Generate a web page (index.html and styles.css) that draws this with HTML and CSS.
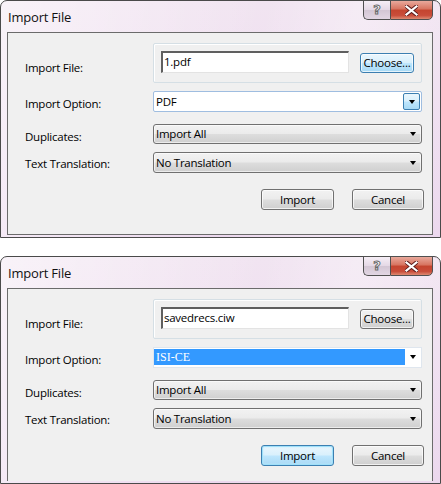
FILE: index.html
```html
<!DOCTYPE html>
<html>
<head>
<meta charset="utf-8">
<link rel="stylesheet" href="styles.css">
</head>
<body>
<div class="screen">
  <div class="window">
    <div class="titlebar">
      <span class="title">Import File</span>
      <div class="caption">
        <div class="cap help">?</div>
        <div class="cap close">
          <svg width="13" height="11" viewBox="0 0 13 11"><path d="M1 1 L12 10 M12 1 L1 10" stroke="#5a1a1a" stroke-width="4" stroke-linecap="square"/><path d="M1.5 1.5 L11.5 9.5 M11.5 1.5 L1.5 9.5" stroke="#fff" stroke-width="2.2" stroke-linecap="square"/></svg>
        </div>
      </div>
    </div>
    <div class="client">
      <div class="row row1">
        <span class="lbl l1">Import File:</span>
        <div class="group">
          <div class="input">1.pdf</div>
          <div class="btn btn-hot choose">Choose...</div>
        </div>
      </div>
      <div class="row row2">
        <span class="lbl l2">Import Option:</span>
        <div class="combo combo-edit">
          <span class="val">PDF</span>
          <span class="dd-btn"><span class="arrow"></span></span>
        </div>
      </div>
      <div class="row row3">
        <span class="lbl l3">Duplicates:</span>
        <div class="combo"><span class="val">Import All</span><span class="arrow"></span></div>
      </div>
      <div class="row row4">
        <span class="lbl l4">Text Translation:</span>
        <div class="combo"><span class="val">No Translation</span><span class="arrow"></span></div>
      </div>
      <div class="actions">
        <div class="btn import">Import</div>
        <div class="btn cancel">Cancel</div>
      </div>
    </div>
  </div>

  <div class="window second">
    <div class="titlebar">
      <span class="title">Import File</span>
      <div class="caption">
        <div class="cap help">?</div>
        <div class="cap close">
          <svg width="13" height="11" viewBox="0 0 13 11"><path d="M1 1 L12 10 M12 1 L1 10" stroke="#5a1a1a" stroke-width="4" stroke-linecap="square"/><path d="M1.5 1.5 L11.5 9.5 M11.5 1.5 L1.5 9.5" stroke="#fff" stroke-width="2.2" stroke-linecap="square"/></svg>
        </div>
      </div>
    </div>
    <div class="client">
      <div class="row row1">
        <span class="lbl l1">Import File:</span>
        <div class="group">
          <div class="input">savedrecs.ciw</div>
          <div class="btn choose">Choose...</div>
        </div>
      </div>
      <div class="row row2">
        <span class="lbl l2">Import Option:</span>
        <div class="combo combo-list">
          <span class="sel">ISI-CE</span>
          <span class="arrow"></span>
        </div>
      </div>
      <div class="row row3">
        <span class="lbl l3">Duplicates:</span>
        <div class="combo"><span class="val">Import All</span><span class="arrow"></span></div>
      </div>
      <div class="row row4">
        <span class="lbl l4">Text Translation:</span>
        <div class="combo"><span class="val">No Translation</span><span class="arrow"></span></div>
      </div>
      <div class="actions">
        <div class="btn btn-default import">Import</div>
        <div class="btn cancel">Cancel</div>
      </div>
    </div>
  </div>
</div>
</body>
</html>
```

FILE: styles.css
```css
html, body {
  margin: 0;
  padding: 0;
  background: #ffffff;
}
body {
  font-family: "Open Sans", "Noto Sans", sans-serif;
  font-size: 11.5px;
  letter-spacing: -0.25px;
  color: #000;
}
.screen {
  display: flex;
  flex-direction: column;
  gap: 18px;
  width: 441px;
}
.window {
  width: 441px;
  height: 238px;
  box-sizing: border-box;
  border: 1px solid #4a4a4a;
  border-radius: 7px 7px 0 0;
  padding: 0 7px 2px 6px;
  background:
    linear-gradient(100deg, rgba(255,255,255,0.55) 0%, rgba(255,255,255,0.25) 30%, rgba(255,255,255,0) 55%, rgba(255,255,255,0.3) 75%, rgba(255,255,255,0) 100%),
    linear-gradient(180deg, #f1e4f1 0%, #ecd8ee 100%);
  display: flex;
  flex-direction: column;
}
.second {
  height: 228px;
}
.titlebar {
  height: 31px;
  display: flex;
  justify-content: space-between;
  align-items: flex-start;
  flex: none;
}
.title {
  font-size: 13px;
  letter-spacing: -0.2px;
  line-height: 18px;
  margin-top: 7px;
  margin-left: 1px;
  color: #111;
}
.caption {
  display: flex;
  margin-top: -1px;
}
.cap {
  height: 20px;
  box-sizing: border-box;
  border: 1px solid #505050;
  display: flex;
  align-items: center;
  justify-content: center;
}
.help {
  width: 27px;
  border-right: none;
  border-radius: 0 0 0 5px;
  background: linear-gradient(180deg, #f6eef6 0%, #e4d8e5 50%, #d3c6d4 51%, #e2d6e3 100%);
  color: #fff;
  font-family: "DejaVu Sans", sans-serif;
  font-weight: bold;
  font-size: 13px;
  letter-spacing: 0;
  -webkit-text-stroke: 1px #6a6a6a;
  line-height: 18px;
}
.close {
  width: 43px;
  border-radius: 0 0 5px 0;
  background: linear-gradient(180deg, #e9a99c 0%, #d7735f 45%, #c4452f 50%, #c94d3a 80%, #de8a72 100%);
}
.client {
  flex: 1;
  box-sizing: border-box;
  width: 426px;
  border: 1px solid #6b6b6b;
  background: #f0f0f0;
  padding: 0 8px 0 17px;
  display: flex;
  flex-direction: column;
}
.second .client {
  border-bottom: none;
}
.row {
  display: flex;
  align-items: center;
  flex: none;
}
.lbl {
  width: 128px;
  flex: none;
  line-height: 16px;
}
.row1 { margin-top: 10px; height: 40px; }
.row2 { margin-top: 8px; height: 21px; }
.row3 { margin-top: 12px; height: 20px; }
.row4 { margin-top: 8px; height: 21px; }
.l1 { margin-top: 10px; }
.l2 { margin-top: 5px; }
.l3 { margin-top: 6px; }
.l4 { margin-top: 3px; }

.group {
  width: 269px;
  height: 40px;
  box-sizing: border-box;
  border: 1px solid #d5dfe5;
  box-shadow: inset 1px 1px 0 #fff;
  border-radius: 2px;
  padding: 0 7px 9px 7px;
  display: flex;
  align-items: flex-end;
  gap: 11px;
}
.input {
  width: 188px;
  height: 22px;
  box-sizing: border-box;
  background: #fff;
  border-top: 2px solid #5f5f5f;
  border-left: 2px solid #5f5f5f;
  border-right: 1px solid #e3e3e3;
  border-bottom: 1px solid #e3e3e3;
  padding-left: 1px;
  line-height: 17px;
}
.btn {
  box-sizing: border-box;
  height: 21px;
  border: 1px solid #707070;
  border-radius: 3px;
  background: linear-gradient(180deg, #f2f2f2 0%, #ebebeb 48%, #dddddd 52%, #cfcfcf 100%);
  box-shadow: inset 0 0 0 1px rgba(255,255,255,0.7);
  display: flex;
  align-items: center;
  justify-content: center;
  line-height: 16px;
}
.choose {
  width: 54px;
  height: 20px;
  padding-bottom: 1px;
}
.btn-hot, .btn-default {
  border-color: #3c7fb1;
  background: linear-gradient(180deg, #eaf6fd 0%, #d9f0fc 48%, #bee6fd 52%, #a7d9f5 100%);
}
.btn-default {
  box-shadow: inset 0 0 0 1px #9fe0fa, inset 0 0 2px 1px #bfeafc;
}

.combo {
  width: 269px;
  height: 100%;
  box-sizing: border-box;
  border: 1px solid #707070;
  border-radius: 3px;
  background: linear-gradient(180deg, #f2f2f2 0%, #ebebeb 48%, #dddddd 52%, #cfcfcf 100%);
  box-shadow: inset 0 0 0 1px rgba(255,255,255,0.6);
  display: flex;
  align-items: center;
  justify-content: space-between;
  padding: 0 5px 0 2px;
}
.combo .val {
  line-height: 16px;
}
.arrow {
  width: 0;
  height: 0;
  border-left: 3.5px solid transparent;
  border-right: 3.5px solid transparent;
  border-top: 4px solid #000;
}
.combo-edit {
  background: #fff;
  border: 1px solid #9fbde0;
  border-radius: 2px;
  box-shadow: none;
  padding: 1px 1px 1px 2px;
  align-items: stretch;
}
.combo-edit .val {
  display: flex;
  align-items: center;
}
.dd-btn {
  width: 17px;
  box-sizing: border-box;
  border: 1px solid #3c7fb1;
  border-radius: 2px;
  background: linear-gradient(180deg, #eaf6fd 0%, #d9f0fc 48%, #bee6fd 52%, #a7d9f5 100%);
  display: flex;
  align-items: center;
  justify-content: center;
}
.combo-list {
  background: #fff;
  border: 1px solid #dfe6ee;
  border-radius: 0;
  box-shadow: none;
  padding: 1px 5px 2px 0;
  align-items: stretch;
}
.combo-list .arrow {
  align-self: center;
}
.sel {
  width: 249px;
  background: #3399ff;
  color: #fff;
  font-family: "Liberation Serif", serif;
  font-size: 12px;
  letter-spacing: 0;
  line-height: 16px;
  padding-left: 2px;
}

.actions {
  margin-top: 16px;
  display: flex;
  justify-content: flex-end;
  gap: 18px;
  flex: none;
}
.import { width: 73px; }
.cancel { width: 72px; }
```
